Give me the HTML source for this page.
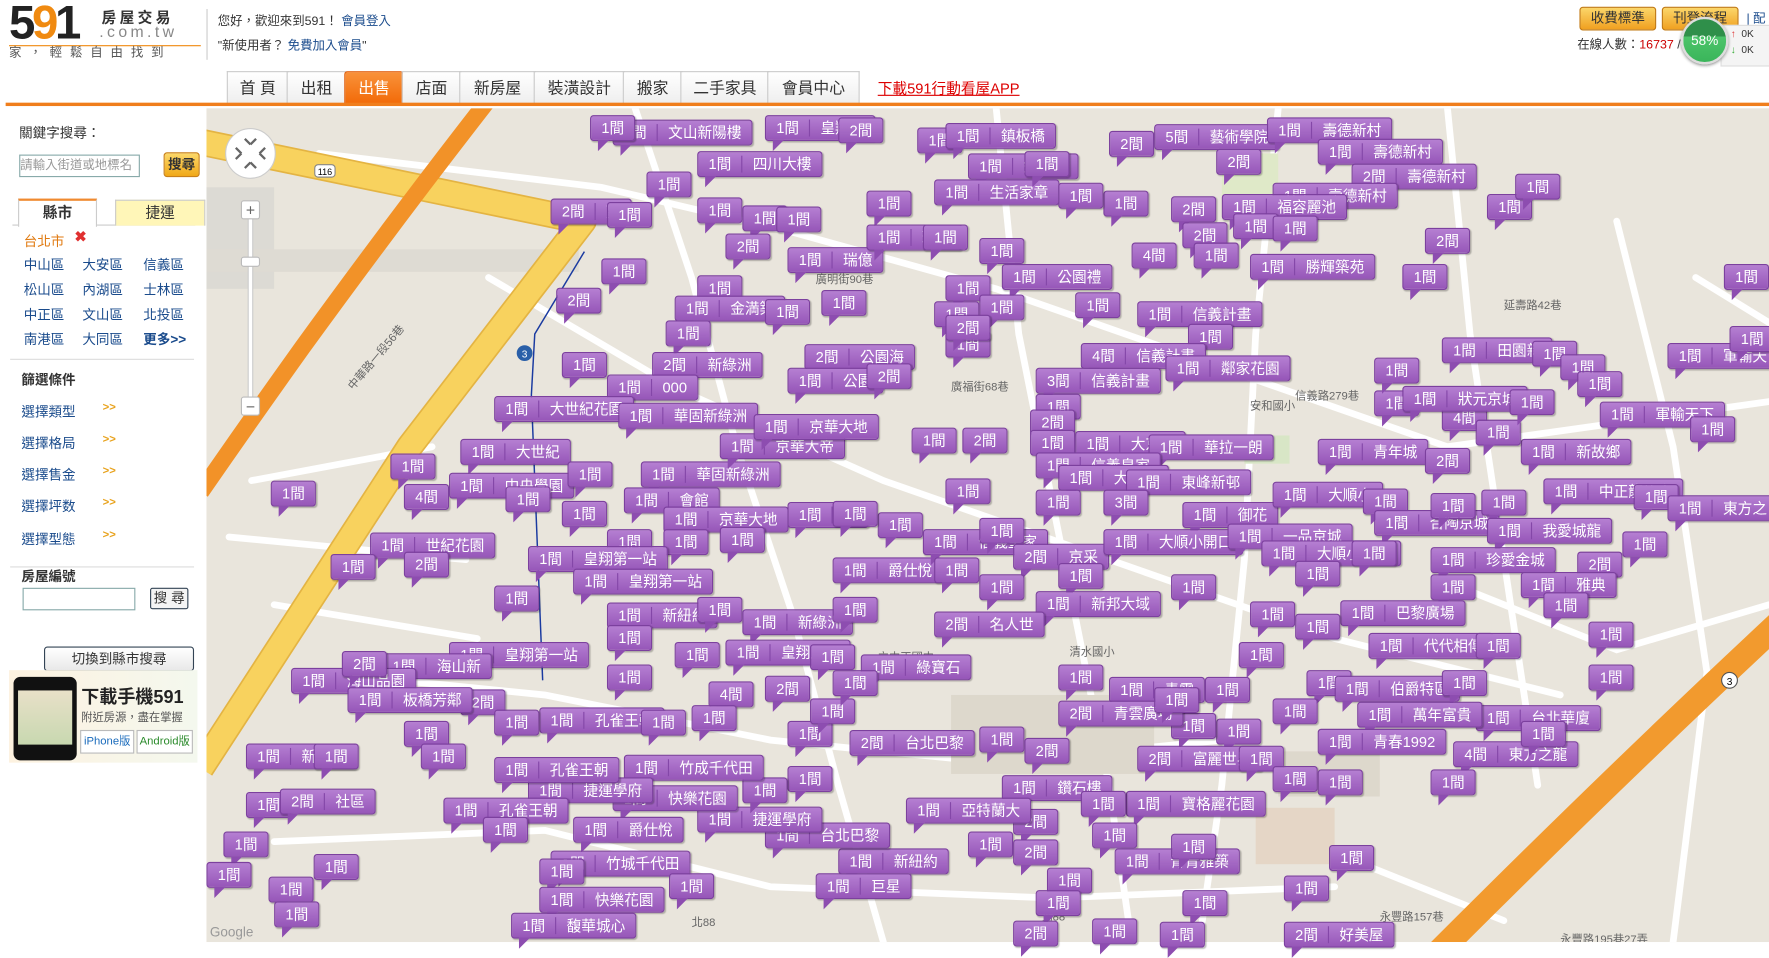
<!DOCTYPE html>
<html><head><meta charset="utf-8"><style>
html,body{margin:0;padding:0;width:1769px;height:942px;overflow:hidden;background:#fff}
#w{position:absolute;left:0;top:0;width:1568px;height:835px;transform:scale(1.12819);transform-origin:0 0;font-family:"Liberation Sans","Noto Sans CJK TC",sans-serif;font-size:12px;color:#333}
.a{position:absolute;white-space:nowrap}
#map{position:absolute;left:183px;top:96px;width:1385px;height:739px;background:#e9e5dc;overflow:hidden}
.m{position:absolute;transform:translate(-22px,-11px);height:21px;padding:0 9px;background:linear-gradient(#b57fd2,#9656b8);border:1px solid #7c409e;border-radius:3px;color:#fff;font-size:13px;line-height:21px;white-space:nowrap;box-shadow:1px 1px 1px rgba(0,0,0,.25)}
.m:after{content:"";position:absolute;left:6px;top:21px;border-top:10px solid #8d4db0;border-right:10px solid transparent}
.m i{font-style:normal;border-left:1px solid #8447a8;margin-left:9px;padding-left:9px}
.nav{position:absolute;top:63px;height:28px;line-height:28px;font-size:14px;color:#333;text-align:center;border:1px solid #ccc;border-bottom:none;background:linear-gradient(#fff,#eee)}
.d{position:absolute;color:#1a4b8c;font-size:12px}
.o{position:absolute;color:#1a4b8c;font-size:12px;left:19px}
.o b{position:absolute;left:72px;color:#e8a21c;font-size:10px}
</style></head><body><div id="w">
<!-- header -->
<div class="a" style="left:8px;top:-4px;font:bold 42px/48px 'Liberation Sans',sans-serif;color:#222;letter-spacing:-3px">5<span style="color:#f08a10">9</span>1</div>
<div class="a" style="left:90px;top:5px;font-weight:bold;font-size:13px;letter-spacing:3px;color:#333">房屋交易</div>
<div class="a" style="left:88px;top:20px;font-size:14px;letter-spacing:3px;color:#888">.com.tw</div>
<div class="a" style="left:8px;top:40px;width:170px;border-top:1px solid #f08a10"></div>
<div class="a" style="left:8px;top:38px;font-size:11px;letter-spacing:7px;color:#555">家，輕鬆自由找到</div>
<div class="a" style="left:183px;top:8px;height:45px;border-left:1px solid #ccc"></div>
<div class="a" style="left:193px;top:10px;font-size:11px">您好，歡迎來到591！ <span style="color:#1a4b8c">會員登入</span></div>
<div class="a" style="left:193px;top:32px;font-size:11px">"新使用者？ <span style="color:#1a4b8c">免費加入會員</span>"</div>
<div class="nav" style="left:201px;width:53px">首 頁</div>
<div class="nav" style="left:254px;width:51px">出租</div>
<div class="nav" style="left:305px;width:51px;background:linear-gradient(#f9923a,#f26a08);color:#fff;border-color:#e06010;border-radius:3px 3px 0 0">出售</div>
<div class="nav" style="left:356px;width:51px">店面</div>
<div class="nav" style="left:407px;width:66px">新房屋</div>
<div class="nav" style="left:473px;width:79px">裝潢設計</div>
<div class="nav" style="left:552px;width:51px">搬家</div>
<div class="nav" style="left:603px;width:77px">二手家具</div>
<div class="nav" style="left:680px;width:80px">會員中心</div>
<div class="a" style="left:778px;top:68px;font-size:13px;color:#d00;text-decoration:underline">下載591行動看屋APP</div>
<div class="a" style="left:5px;top:91px;width:1563px;height:3px;background:#f07e1c"></div>
<div class="a" style="left:1400px;top:6px;width:66px;height:19px;background:linear-gradient(#fbd66a,#f0a020);border:1px solid #c07810;border-radius:3px;text-align:center;line-height:19px;font-size:12px;color:#333">收費標準</div>
<div class="a" style="left:1473px;top:6px;width:66px;height:19px;background:linear-gradient(#fbd66a,#f0a020);border:1px solid #c07810;border-radius:3px;text-align:center;line-height:19px;font-size:12px;color:#333">刊登流程</div>
<div class="a" style="left:1548px;top:8px;font-size:11px;color:#1a4b8c">| 配</div>
<div class="a" style="left:1398px;top:31px;font-size:11px">在線人數：<span style="color:#c00">16737</span> /</div>
<div class="a" style="left:1525px;top:22px;width:45px;height:35px;background:#f4f4f4;border:1px solid #ddd;font-size:9px;line-height:14px;padding-left:8px"><span style="color:#d33">↑</span> &nbsp;0K<br><span style="color:#3a3">↓</span> &nbsp;0K</div>
<div class="a" style="left:1490px;top:15px;width:38px;height:38px;border-radius:50%;background:linear-gradient(#2f8f4a 0,#2f8f4a 40%,#4cc46a 41%,#3ab55a);border:2px solid #ddd;box-shadow:0 1px 3px #888;color:#fff;text-align:center;line-height:38px;font-size:12px">58%</div>
<!-- sidebar -->
<div class="a" style="left:17px;top:109px;font-size:12px">關鍵字搜尋：</div>
<div class="a" style="left:17px;top:137px;width:105px;height:18px;border:1px solid #8aa;font-size:11px;line-height:18px;color:#999;overflow:hidden">請輸入街道或地標名</div>
<div class="a" style="left:145px;top:135px;width:30px;height:20px;background:linear-gradient(#fcd86a,#f0a818);border:1px solid #c8801a;border-radius:3px;text-align:center;font-weight:bold;line-height:20px">搜尋</div>
<div class="a" style="left:11px;top:199px;width:162px;border-top:1px solid #ccc"></div>
<div class="a" style="left:16px;top:176px;width:68px;height:23px;border:1px solid #ccc;border-top:2px solid #f08a30;border-bottom:none;background:#fff;text-align:center;line-height:22px;font-weight:bold;font-size:13px">縣市</div>
<div class="a" style="left:102px;top:177px;width:78px;height:22px;border:1px solid #ccc;border-bottom:none;background:#fff6b8;text-align:center;line-height:22px;font-size:13px">捷運</div>
<div class="a" style="left:21px;top:205px;color:#e07a10">台北市</div>
<div class="a" style="left:66px;top:202px;color:#e03030;font-weight:bold;font-size:13px">✖</div>
<div class="d" style="left:21px;top:226px">中山區</div><div class="d" style="left:73px;top:226px">大安區</div><div class="d" style="left:127px;top:226px">信義區</div>
<div class="d" style="left:21px;top:248px">松山區</div><div class="d" style="left:73px;top:248px">內湖區</div><div class="d" style="left:127px;top:248px">士林區</div>
<div class="d" style="left:21px;top:270px">中正區</div><div class="d" style="left:73px;top:270px">文山區</div><div class="d" style="left:127px;top:270px">北投區</div>
<div class="d" style="left:21px;top:292px">南港區</div><div class="d" style="left:73px;top:292px">大同區</div><div class="d" style="left:127px;top:292px;font-weight:bold">更多&gt;&gt;</div>
<div class="a" style="left:9px;top:318px;width:163px;border-top:1px solid #ddd"></div>
<div class="a" style="left:19px;top:328px;font-weight:bold">篩選條件</div>
<div class="o" style="top:356px">選擇類型<b>&gt;&gt;</b></div>
<div class="o" style="top:384px">選擇格局<b>&gt;&gt;</b></div>
<div class="o" style="top:412px">選擇售金<b>&gt;&gt;</b></div>
<div class="o" style="top:440px">選擇坪数<b>&gt;&gt;</b></div>
<div class="o" style="top:469px">選擇型態<b>&gt;&gt;</b></div>
<div class="a" style="left:9px;top:502px;width:163px;border-top:1px solid #ddd"></div>
<div class="a" style="left:19px;top:502px;font-weight:bold">房屋編號</div>
<div class="a" style="left:20px;top:521px;width:98px;height:18px;border:1px solid #8aa"></div>
<div class="a" style="left:133px;top:521px;width:32px;height:17px;border:1px solid #345;border-radius:2px;background:#f4f4f4;text-align:center;line-height:17px">搜 尋</div>
<div class="a" style="left:39px;top:573px;width:131px;height:20px;border:1px solid #345;border-radius:3px;background:linear-gradient(#fff,#e8e8e8);text-align:center;line-height:21px">切換到縣市搜尋</div>
<div class="a" style="left:8px;top:594px;width:167px;height:82px;background:linear-gradient(90deg,#fdf2e0,#f4f8ee)"></div>
<div class="a" style="left:12px;top:600px;width:56px;height:74px;background:#111;border-radius:6px"><div style="margin:12px 4px;height:48px;background:linear-gradient(#e8e0c8,#c8d8b0)"></div></div>
<div class="a" style="left:72px;top:604px;font-size:16px;font-weight:bold;color:#222">下載手機591</div>
<div class="a" style="left:72px;top:627px;font-size:10px;color:#555">附近房源，盡在掌握</div>
<div class="a" style="left:71px;top:647px;width:46px;height:19px;border:1px solid #bbb;background:#fff;font-size:10px;line-height:19px;text-align:center;color:#1a6bbc">iPhone版</div>
<div class="a" style="left:121px;top:647px;width:48px;height:19px;border:1px solid #bbb;background:#fff;font-size:10px;line-height:19px;text-align:center;color:#2a8a2a">Android版</div>
<!-- map -->
<div id="map">
<svg width="1385" height="739" style="position:absolute;left:0;top:0">
<rect x="0" y="70" width="60" height="90" fill="#dcdad4"/>
<rect x="0" y="125" width="330" height="20" fill="#dedbd3"/>
<g fill="none" stroke="#fff" stroke-width="6" stroke-linecap="round">
<path d="M100 40 L350 70 L520 110 L700 160 L900 230 L1100 300 L1385 260"/>
<path d="M250 150 L420 250 L600 330 L800 400 L1000 470 L1200 520"/>
<path d="M380 0 L430 150 L470 300 L520 450 L560 600 L600 739"/>
<path d="M700 0 L720 200 L760 400 L800 600 L820 739"/>
<path d="M950 0 L930 200 L920 400 L900 600 L880 739"/>
<path d="M1100 0 L1120 200 L1150 400 L1180 600"/>
<path d="M1250 100 L1300 300 L1330 500 L1300 739"/>
<path d="M100 500 L300 520 L500 560 L700 580 L900 560"/>
<path d="M60 650 L300 640 L500 690 L750 700 L1000 690"/>
<path d="M1100 420 L1250 480 L1385 440"/>
<path d="M1000 660 L1150 720"/>
<path d="M1320 150 L1385 190"/>
<path d="M40 330 L200 300 M20 380 L230 400 M60 440 L240 470"/>
</g>
<rect x="900" y="40" width="50" height="50" fill="#dfe9c8"/>
<rect x="920" y="290" width="40" height="25" fill="#d8e6c6"/>
<rect x="660" y="520" width="180" height="70" fill="#ddd8cc"/>
<rect x="950" y="570" width="90" height="40" fill="#ddd8cc"/>
<rect x="930" y="620" width="70" height="50" fill="#e5d6c6"/>
<path d="M-5 30 L150 62 L334 100 L180 300 L-5 585" fill="none" stroke="#e4b443" stroke-width="24" stroke-linejoin="round"/>
<path d="M-5 30 L150 62 L334 100 L180 300 L-5 585" fill="none" stroke="#f8d25e" stroke-width="21" stroke-linejoin="round"/>
<path d="M-5 340 Q40 275 85 212 Q170 95 248 -5" fill="none" stroke="#f29228" stroke-width="15"/>
<path d="M1090 750 Q1250 590 1395 455" fill="none" stroke="#f29a2e" stroke-width="22"/>
<path d="M335 127 L291 200 L288 254 L298 507" stroke="#1a3aa0" stroke-width="1.3" fill="none"/>
<circle cx="39" cy="40" r="22" fill="#fff" stroke="#ccc"/>
<path d="M31 40 l-5 -5 M31 40 l-5 5 M47 40 l5 -5 M47 40 l5 5 M39 32 l-5 -5 M39 32 l5 -5 M39 48 l-5 5 M39 48 l5 5" stroke="#666" stroke-width="2"/>
<rect x="37" y="90" width="4" height="170" fill="#fff" stroke="#ccc"/>
<rect x="31" y="82" width="16" height="16" fill="#fff" stroke="#bbb" rx="2"/><text x="39" y="95" text-anchor="middle" font-size="14" fill="#666">+</text>
<rect x="31" y="132" width="16" height="8" fill="#fff" stroke="#bbb" rx="2"/>
<rect x="31" y="256" width="16" height="16" fill="#fff" stroke="#bbb" rx="2"/><text x="39" y="269" text-anchor="middle" font-size="14" fill="#666">−</text>
<g font-size="10" fill="#666" font-family="Liberation Sans,Noto Sans CJK TC,sans-serif">
<text x="540" y="155">廣明街90巷</text><text x="660" y="250">廣福街68巷</text><text x="965" y="258">信義路279巷</text>
<text x="1150" y="178">延壽路42巷</text><text x="595" y="490">立中正國中</text><text x="765" y="485">清水國小</text>
<text x="1040" y="720">永豐路157巷</text><text x="1200" y="740">永豐路195巷27弄</text><text x="925" y="267">安和國小</text>
<text x="740" y="720">北88</text><text x="430" y="725">北88</text><text x="3" y="734" fill="#999" font-size="12">Google</text>
<text x="130" y="250" transform="rotate(-50 130 250)">中華路一段56巷</text>
</g>
<rect x="96" y="50" width="18" height="11" rx="3" fill="#fff" stroke="#888"/><text x="105" y="59" font-size="8" text-anchor="middle">116</text>
<circle cx="282" cy="217" r="7" fill="#2a5fa8"/><text x="282" y="221" font-size="9" fill="#fff" text-anchor="middle">3</text>
<circle cx="1350" cy="507" r="7" fill="#fff" stroke="#555"/><text x="1350" y="511" font-size="9" text-anchor="middle">3</text>
</svg>
</div>
<!-- markers -->
<div style="position:absolute;left:0;top:0">
<div class="m" style="left:565px;top:117px">1間<i>文山新陽樓</i></div><div class="m" style="left:545px;top:113px">1間</div><div class="m" style="left:700px;top:113px">1間<i>皇翔帝</i></div><div class="m" style="left:765px;top:115px">2間</div>
<div class="m" style="left:640px;top:145px">1間<i>四川大樓</i></div><div class="m" style="left:595px;top:163px">1間</div><div class="m" style="left:510px;top:187px">2間<i>望</i></div><div class="m" style="left:560px;top:190px">1間</div>
<div class="m" style="left:640px;top:186px">1間</div><div class="m" style="left:680px;top:193px">1間</div><div class="m" style="left:665px;top:218px">2間</div><div class="m" style="left:710px;top:194px">1間</div>
<div class="m" style="left:720px;top:230px">1間<i>瑞億</i></div><div class="m" style="left:555px;top:240px">1間</div><div class="m" style="left:515px;top:266px">2間</div><div class="m" style="left:640px;top:255px">1間</div>
<div class="m" style="left:620px;top:273px">1間<i>金満築</i></div><div class="m" style="left:700px;top:276px">1間</div><div class="m" style="left:750px;top:268px">1間</div><div class="m" style="left:612px;top:295px">1間</div>
<div class="m" style="left:600px;top:323px">2間<i>新綠洲</i></div><div class="m" style="left:520px;top:323px">1間</div><div class="m" style="left:560px;top:343px">1間<i>000</i></div>
<div class="m" style="left:460px;top:362px">1間<i>大世紀花園</i></div><div class="m" style="left:570px;top:368px">1間<i>華固新綠洲</i></div><div class="m" style="left:735px;top:316px">2間<i>公園海</i></div><div class="m" style="left:720px;top:337px">1間<i>公園</i></div><div class="m" style="left:790px;top:333px">2間</div>
<div class="m" style="left:835px;top:124px">1間</div><div class="m" style="left:860px;top:120px">1間<i>鎮板橋</i></div><div class="m" style="left:880px;top:147px">1間<i>鎮板橋</i></div><div class="m" style="left:850px;top:170px">1間<i>生活家章</i></div>
<div class="m" style="left:930px;top:145px">1間</div><div class="m" style="left:1005px;top:127px">2間</div><div class="m" style="left:1045px;top:121px">5間<i>藝術學院</i></div><div class="m" style="left:1100px;top:143px">2間</div>
<div class="m" style="left:1145px;top:115px">1間<i>壽德新村</i></div><div class="m" style="left:1190px;top:134px">1間<i>壽德新村</i></div><div class="m" style="left:1220px;top:156px">2間<i>壽德新村</i></div><div class="m" style="left:1150px;top:173px">1間<i>壽德新村</i></div>
<div class="m" style="left:1105px;top:183px">1間<i>福容麗池</i></div><div class="m" style="left:1060px;top:185px">2間</div><div class="m" style="left:1000px;top:180px">1間</div><div class="m" style="left:960px;top:173px">1間</div>
<div class="m" style="left:1070px;top:208px">2間</div><div class="m" style="left:1115px;top:200px">1間</div><div class="m" style="left:1150px;top:202px">1間</div><div class="m" style="left:1130px;top:236px">1間<i>勝輝築苑</i></div>
<div class="m" style="left:1025px;top:226px">4間</div><div class="m" style="left:1080px;top:226px">1間</div><div class="m" style="left:1285px;top:213px">2間</div><div class="m" style="left:1340px;top:183px">1間</div><div class="m" style="left:1365px;top:165px">1間</div><div class="m" style="left:1265px;top:245px">1間</div>
<div class="m" style="left:790px;top:180px">1間</div><div class="m" style="left:790px;top:210px">1間<i>瑞億</i></div><div class="m" style="left:840px;top:210px">1間</div><div class="m" style="left:890px;top:222px">1間</div>
<div class="m" style="left:910px;top:245px">1間<i>公園禮</i></div><div class="m" style="left:860px;top:255px">1間</div><div class="m" style="left:850px;top:278px">1間</div><div class="m" style="left:890px;top:272px">1間</div>
<div class="m" style="left:975px;top:270px">1間</div><div class="m" style="left:1030px;top:278px">1間<i>信義計畫</i></div><div class="m" style="left:1075px;top:298px">1間</div><div class="m" style="left:980px;top:315px">4間<i>信義計畫</i></div>
<div class="m" style="left:1055px;top:326px">1間<i>鄰家花園</i></div><div class="m" style="left:940px;top:337px">3間<i>信義計畫</i></div><div class="m" style="left:940px;top:360px">1間</div><div class="m" style="left:935px;top:374px">2間</div><div class="m" style="left:860px;top:305px">1間</div><div class="m" style="left:860px;top:290px">2間</div>
<div class="m" style="left:368px;top:413px">1間</div><div class="m" style="left:262px;top:437px">1間</div><div class="m" style="left:380px;top:440px">4間</div><div class="m" style="left:430px;top:400px">1間<i>大世紀</i></div>
<div class="m" style="left:420px;top:430px">1間<i>中央學園</i></div><div class="m" style="left:470px;top:442px">1間</div><div class="m" style="left:525px;top:420px">1間</div><div class="m" style="left:590px;top:420px">1間<i>華固新綠洲</i></div>
<div class="m" style="left:660px;top:395px">1間<i>京華大帝</i></div><div class="m" style="left:690px;top:378px">1間<i>京華大地</i></div><div class="m" style="left:575px;top:443px">1間<i>會館</i></div><div class="m" style="left:520px;top:455px">1間</div>
<div class="m" style="left:610px;top:460px">1間<i>京華大地</i></div><div class="m" style="left:720px;top:456px">1間<i>美</i></div><div class="m" style="left:660px;top:478px">1間</div><div class="m" style="left:610px;top:480px">1間</div><div class="m" style="left:560px;top:480px">1間</div>
<div class="m" style="left:350px;top:483px">1間<i>世紀花園</i></div><div class="m" style="left:315px;top:502px">1間</div><div class="m" style="left:380px;top:500px">2間</div><div class="m" style="left:490px;top:495px">1間<i>皇翔第一站</i></div>
<div class="m" style="left:530px;top:515px">1間<i>皇翔第一站</i></div><div class="m" style="left:460px;top:530px">1間</div><div class="m" style="left:560px;top:545px">1間<i>新紐約</i></div><div class="m" style="left:640px;top:540px">1間</div>
<div class="m" style="left:680px;top:551px">1間<i>新綠洲</i></div><div class="m" style="left:760px;top:540px">1間</div><div class="m" style="left:760px;top:505px">1間<i>爵仕悅</i></div><div class="m" style="left:800px;top:465px">1間</div>
<div class="m" style="left:760px;top:455px">1間</div><div class="m" style="left:840px;top:480px">1間<i>信義皇家</i></div><div class="m" style="left:890px;top:470px">1間</div><div class="m" style="left:920px;top:493px">2間<i>京采</i></div>
<div class="m" style="left:850px;top:505px">1間</div><div class="m" style="left:890px;top:520px">1間</div><div class="m" style="left:960px;top:510px">1間</div><div class="m" style="left:940px;top:535px">1間<i>新邦大域</i></div><div class="m" style="left:850px;top:553px">2間<i>名人世</i></div>
<div class="m" style="left:830px;top:390px">1間</div><div class="m" style="left:875px;top:390px">2間</div><div class="m" style="left:935px;top:392px">1間</div><div class="m" style="left:975px;top:393px">1間<i>大京采</i></div>
<div class="m" style="left:1040px;top:396px">1間<i>華拉一朗</i></div><div class="m" style="left:940px;top:412px">1間<i>信義皇家</i></div><div class="m" style="left:960px;top:423px">1間<i>大京采</i></div><div class="m" style="left:1020px;top:427px">1間<i>東峰新邨</i></div>
<div class="m" style="left:860px;top:435px">1間</div><div class="m" style="left:940px;top:445px">1間</div><div class="m" style="left:1000px;top:445px">3間</div><div class="m" style="left:1070px;top:456px">1間<i>御花</i></div>
<div class="m" style="left:1000px;top:480px">1間<i>大順小開口</i></div><div class="m" style="left:1110px;top:475px">1間<i>一品京城</i></div><div class="m" style="left:1140px;top:490px">1間<i>大順小開口</i></div><div class="m" style="left:1060px;top:520px">1間</div>
<div class="m" style="left:1150px;top:438px">1間<i>大順小</i></div><div class="m" style="left:1190px;top:400px">1間<i>青年城</i></div><div class="m" style="left:1285px;top:408px">2間</div><div class="m" style="left:1370px;top:400px">1間<i>新故鄉</i></div>
<div class="m" style="left:1300px;top:370px">4間</div><div class="m" style="left:1240px;top:357px">1間</div><div class="m" style="left:1265px;top:353px">1間<i>狀元京城</i></div><div class="m" style="left:1240px;top:328px">1間</div>
<div class="m" style="left:1300px;top:310px">1間<i>田園新</i></div><div class="m" style="left:1380px;top:313px">1間</div><div class="m" style="left:1405px;top:325px">1間</div><div class="m" style="left:1440px;top:367px">1間<i>軍輸天下</i></div>
<div class="m" style="left:1500px;top:315px">1間<i>軍輸天下</i></div><div class="m" style="left:1520px;top:380px">1間</div><div class="m" style="left:1420px;top:340px">1間</div><div class="m" style="left:1330px;top:383px">1間</div><div class="m" style="left:1360px;top:356px">1間</div>
<div class="m" style="left:1390px;top:435px">1間<i>中正龍傢家</i></div><div class="m" style="left:1470px;top:440px">1間</div><div class="m" style="left:1500px;top:450px">1間<i>東方之</i></div><div class="m" style="left:1230px;top:444px">1間</div>
<div class="m" style="left:1240px;top:463px">1間<i>合陶京城</i></div><div class="m" style="left:1290px;top:448px">1間</div><div class="m" style="left:1335px;top:445px">1間</div><div class="m" style="left:1340px;top:470px">1間<i>我愛城龍</i></div>
<div class="m" style="left:1290px;top:496px">1間<i>珍愛金城</i></div><div class="m" style="left:1220px;top:490px">1間</div><div class="m" style="left:1170px;top:508px">1間</div><div class="m" style="left:1420px;top:500px">2間</div><div class="m" style="left:1460px;top:482px">1間</div>
<div class="m" style="left:1370px;top:518px">1間<i>雅典</i></div><div class="m" style="left:1290px;top:520px">1間</div><div class="m" style="left:1210px;top:543px">1間<i>巴黎廣場</i></div><div class="m" style="left:1130px;top:544px">1間</div><div class="m" style="left:1170px;top:555px">1間</div>
<div class="m" style="left:1235px;top:572px">1間<i>代代相傳</i></div><div class="m" style="left:1330px;top:572px">1間</div><div class="m" style="left:1390px;top:536px">1間</div><div class="m" style="left:1430px;top:562px">1間</div>
<div class="m" style="left:1120px;top:580px">1間</div><div class="m" style="left:1180px;top:605px">1間</div><div class="m" style="left:1205px;top:610px">1間<i>伯爵特區</i></div><div class="m" style="left:1300px;top:605px">1間</div>
<div class="m" style="left:1330px;top:636px">1間<i>台北華廈</i></div><div class="m" style="left:1225px;top:633px">1間<i>萬年富貴</i></div><div class="m" style="left:1150px;top:630px">1間</div><div class="m" style="left:1190px;top:657px">1間<i>青春1992</i></div>
<div class="m" style="left:1100px;top:648px">1間</div><div class="m" style="left:1060px;top:643px">1間</div><div class="m" style="left:1030px;top:672px">2間<i>富麗世界</i></div><div class="m" style="left:1120px;top:672px">1間</div><div class="m" style="left:1150px;top:690px">1間</div>
<div class="m" style="left:1190px;top:693px">1間</div><div class="m" style="left:1310px;top:668px">4間<i>東方之龍</i></div><div class="m" style="left:1370px;top:650px">1間</div><div class="m" style="left:1290px;top:693px">1間</div>
<div class="m" style="left:1005px;top:611px">1間<i>青雲</i></div><div class="m" style="left:1090px;top:611px">1間</div><div class="m" style="left:960px;top:600px">1間</div><div class="m" style="left:960px;top:632px">2間<i>青雲廣場</i></div>
<div class="m" style="left:890px;top:655px">1間</div><div class="m" style="left:930px;top:665px">2間</div><div class="m" style="left:910px;top:698px">1間<i>鑽石樓</i></div><div class="m" style="left:1020px;top:712px">1間<i>寶格麗花園</i></div>
<div class="m" style="left:980px;top:712px">1間</div><div class="m" style="left:990px;top:740px">1間</div><div class="m" style="left:920px;top:728px">2間</div><div class="m" style="left:880px;top:748px">1間</div><div class="m" style="left:920px;top:755px">2間</div>
<div class="m" style="left:950px;top:780px">1間</div><div class="m" style="left:1010px;top:763px">1間<i>青青雅築</i></div><div class="m" style="left:1070px;top:800px">1間</div><div class="m" style="left:1160px;top:787px">1間</div><div class="m" style="left:1200px;top:760px">1間</div>
<div class="m" style="left:940px;top:800px">1間</div><div class="m" style="left:1060px;top:750px">1間</div><div class="m" style="left:920px;top:827px">2間</div><div class="m" style="left:990px;top:825px">1間</div><div class="m" style="left:1050px;top:828px">1間</div><div class="m" style="left:1160px;top:828px">2間<i>好美屋</i></div>
<div class="m" style="left:785px;top:591px">1間<i>綠寶石</i></div><div class="m" style="left:775px;top:658px">2間<i>台北巴黎</i></div><div class="m" style="left:825px;top:718px">1間<i>亞特蘭大</i></div><div class="m" style="left:765px;top:763px">1間<i>新紐約</i></div>
<div class="m" style="left:745px;top:785px">1間<i>巨星</i></div><div class="m" style="left:700px;top:740px">1間<i>台北巴黎</i></div><div class="m" style="left:640px;top:726px">1間<i>捷運學府</i></div><div class="m" style="left:720px;top:690px">1間</div>
<div class="m" style="left:680px;top:700px">1間</div><div class="m" style="left:700px;top:610px">2間</div><div class="m" style="left:650px;top:615px">4間</div><div class="m" style="left:665px;top:578px">1間<i>皇翔玉鼎</i></div>
<div class="m" style="left:740px;top:582px">1間</div><div class="m" style="left:620px;top:580px">1間</div><div class="m" style="left:635px;top:636px">1間</div><div class="m" style="left:720px;top:650px">1間</div><div class="m" style="left:740px;top:630px">1間</div>
<div class="m" style="left:575px;top:680px">1間<i>竹成千代田</i></div><div class="m" style="left:565px;top:707px">1間<i>快樂花園</i></div><div class="m" style="left:530px;top:735px">1間<i>爵仕悅</i></div><div class="m" style="left:490px;top:700px">1間<i>捷運學府</i></div>
<div class="m" style="left:460px;top:682px">1間<i>孔雀王朝</i></div><div class="m" style="left:500px;top:638px">1間<i>孔雀王朝</i></div><div class="m" style="left:590px;top:640px">1間</div><div class="m" style="left:560px;top:600px">1間</div><div class="m" style="left:560px;top:565px">1間</div>
<div class="m" style="left:430px;top:622px">2間</div><div class="m" style="left:420px;top:580px">1間<i>皇翔第一站</i></div><div class="m" style="left:360px;top:590px">1間<i>海山新</i></div><div class="m" style="left:280px;top:603px">1間<i>海山品園</i></div>
<div class="m" style="left:325px;top:588px">2間</div><div class="m" style="left:330px;top:620px">1間<i>板橋芳鄰</i></div><div class="m" style="left:240px;top:670px">1間<i>新天地</i></div><div class="m" style="left:300px;top:670px">1間</div>
<div class="m" style="left:240px;top:713px">1間</div><div class="m" style="left:270px;top:710px">2間<i>社區</i></div><div class="m" style="left:415px;top:718px">1間<i>孔雀王朝</i></div><div class="m" style="left:450px;top:735px">1間</div>
<div class="m" style="left:510px;top:765px">1間<i>竹城千代田</i></div><div class="m" style="left:500px;top:772px">1間</div><div class="m" style="left:500px;top:797px">1間<i>快樂花園</i></div><div class="m" style="left:475px;top:820px">1間<i>馥華城心</i></div>
<div class="m" style="left:220px;top:748px">1間</div><div class="m" style="left:205px;top:775px">1間</div><div class="m" style="left:300px;top:768px">1間</div><div class="m" style="left:260px;top:788px">1間</div><div class="m" style="left:265px;top:810px">1間</div>
<div class="m" style="left:615px;top:785px">1間</div><div class="m" style="left:380px;top:650px">1間</div><div class="m" style="left:460px;top:640px">1間</div><div class="m" style="left:395px;top:670px">1間</div><div class="m" style="left:760px;top:605px">1間</div>
<div class="m" style="left:1550px;top:245px">1間</div><div class="m" style="left:1555px;top:300px">1間</div><div class="m" style="left:1045px;top:620px">1間</div><div class="m" style="left:1430px;top:600px">1間</div>
</div>
</div></body></html>
